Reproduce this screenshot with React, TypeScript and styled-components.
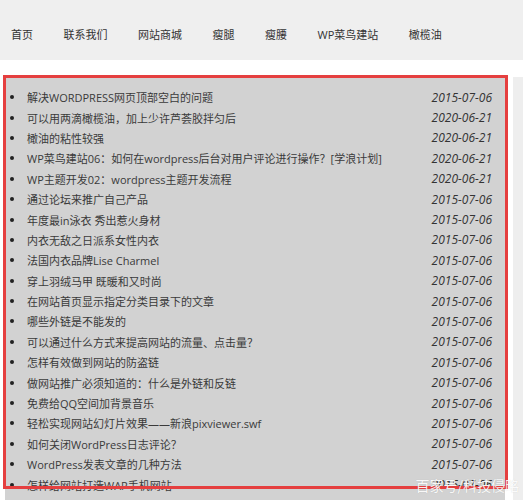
import React from "react";
import styled, { createGlobalStyle } from "styled-components";

const Global = createGlobalStyle`
  html, body { margin: 0; padding: 0; background: #ffffff; }
  body { font-family: "Open Sans", "Noto Sans CJK SC", sans-serif; overflow: hidden; }
  * { box-sizing: border-box; }
`;

const Page = styled.div`
  width: 523px;
  height: 500px;
  position: relative;
  overflow: hidden;
  background: #fff;
`;

const Nav = styled.nav`
  height: 60px;
  background: #efefef;
  display: flex;
  align-items: center;
  gap: 30.5px;
  padding: 8px 0 0 11px;
`;

const NavItem = styled.a`
  font-size: 11px;
  color: #333;
  text-decoration: none;
  white-space: nowrap;
`;

const Content = styled.div`
  display: flex;
  gap: 8px;
  margin-top: 17px;
`;

const Main = styled.div`
  width: 505px;
  flex-shrink: 0;
  padding-left: 5px;
`;

const ListPanel = styled.ul`
  list-style: none;
  margin: 0;
  padding: 10px 13px 0 0;
  background: #d2d2d2;
  height: 430px;
`;

const Row = styled.li`
  display: flex;
  align-items: center;
  justify-content: space-between;
  height: 20.4px;
`;

const Title = styled.span`
  display: flex;
  align-items: center;
  font-size: 11px;
  color: #3a3a3a;
  white-space: nowrap;
  &::before {
    content: "";
    width: 4px;
    height: 4px;
    border-radius: 50%;
    background: #222;
    margin: 0 13px 0 5px;
    flex-shrink: 0;
  }
`;

const DateText = styled.span`
  font-size: 12px;
  font-style: italic;
  color: #333;
  white-space: nowrap;
`;

const Sidebar = styled.aside`
  flex: 1;
  background: #eeeeee;
  height: 430px;
`;

const Highlight = styled.div`
  position: absolute;
  left: 3px;
  top: 75px;
  width: 505px;
  height: 414px;
  border: 3px solid #e53f3f;
  pointer-events: none;
`;

const Watermark = styled.div`
  position: absolute;
  right: 4px;
  bottom: 5px;
  font-size: 14px;
  color: rgba(255, 255, 255, 0.92);
  font-family: "Noto Sans CJK SC", sans-serif;
  text-shadow: 0 0 1px rgba(0, 0, 0, 0.15);
`;

const navItems = ["首页", "联系我们", "网站商城", "瘦腿", "瘦腰", "WP菜鸟建站", "橄榄油"];

const rows: [string, string][] = [
  ["解决WORDPRESS网页顶部空白的问题", "2015-07-06"],
  ["可以用两滴橄榄油，加上少许芦荟胶拌匀后", "2020-06-21"],
  ["橄油的粘性较强", "2020-06-21"],
  ["WP菜鸟建站06：如何在wordpress后台对用户评论进行操作？[学浪计划]", "2020-06-21"],
  ["WP主题开发02：wordpress主题开发流程", "2020-06-21"],
  ["通过论坛来推广自己产品", "2015-07-06"],
  ["年度最in泳衣 秀出惹火身材", "2015-07-06"],
  ["内衣无敌之日派系女性内衣", "2015-07-06"],
  ["法国内衣品牌Lise Charmel", "2015-07-06"],
  ["穿上羽绒马甲 既暖和又时尚", "2015-07-06"],
  ["在网站首页显示指定分类目录下的文章", "2015-07-06"],
  ["哪些外链是不能发的", "2015-07-06"],
  ["可以通过什么方式来提高网站的流量、点击量？", "2015-07-06"],
  ["怎样有效做到网站的防盗链", "2015-07-06"],
  ["做网站推广必须知道的：什么是外链和反链", "2015-07-06"],
  ["免费给QQ空间加背景音乐", "2015-07-06"],
  ["轻松实现网站幻灯片效果——新浪pixviewer.swf", "2015-07-06"],
  ["如何关闭WordPress日志评论？", "2015-07-06"],
  ["WordPress发表文章的几种方法", "2015-07-06"],
  ["怎样给网站打造WAP手机网站", "2015-07-06"],
];

export default function App() {
  return (
    <Page>
      <Global />
      <Nav>
        {navItems.map((n) => (
          <NavItem key={n} href="#">{n}</NavItem>
        ))}
      </Nav>
      <Content>
        <Main>
          <ListPanel>
            {rows.map(([t, d], i) => (
              <Row key={i}>
                <Title>{t}</Title>
                <DateText>{d}</DateText>
              </Row>
            ))}
          </ListPanel>
        </Main>
        <Sidebar />
      </Content>
      <Highlight />
      <Watermark>百家号/科技侵略</Watermark>
    </Page>
  );
}
